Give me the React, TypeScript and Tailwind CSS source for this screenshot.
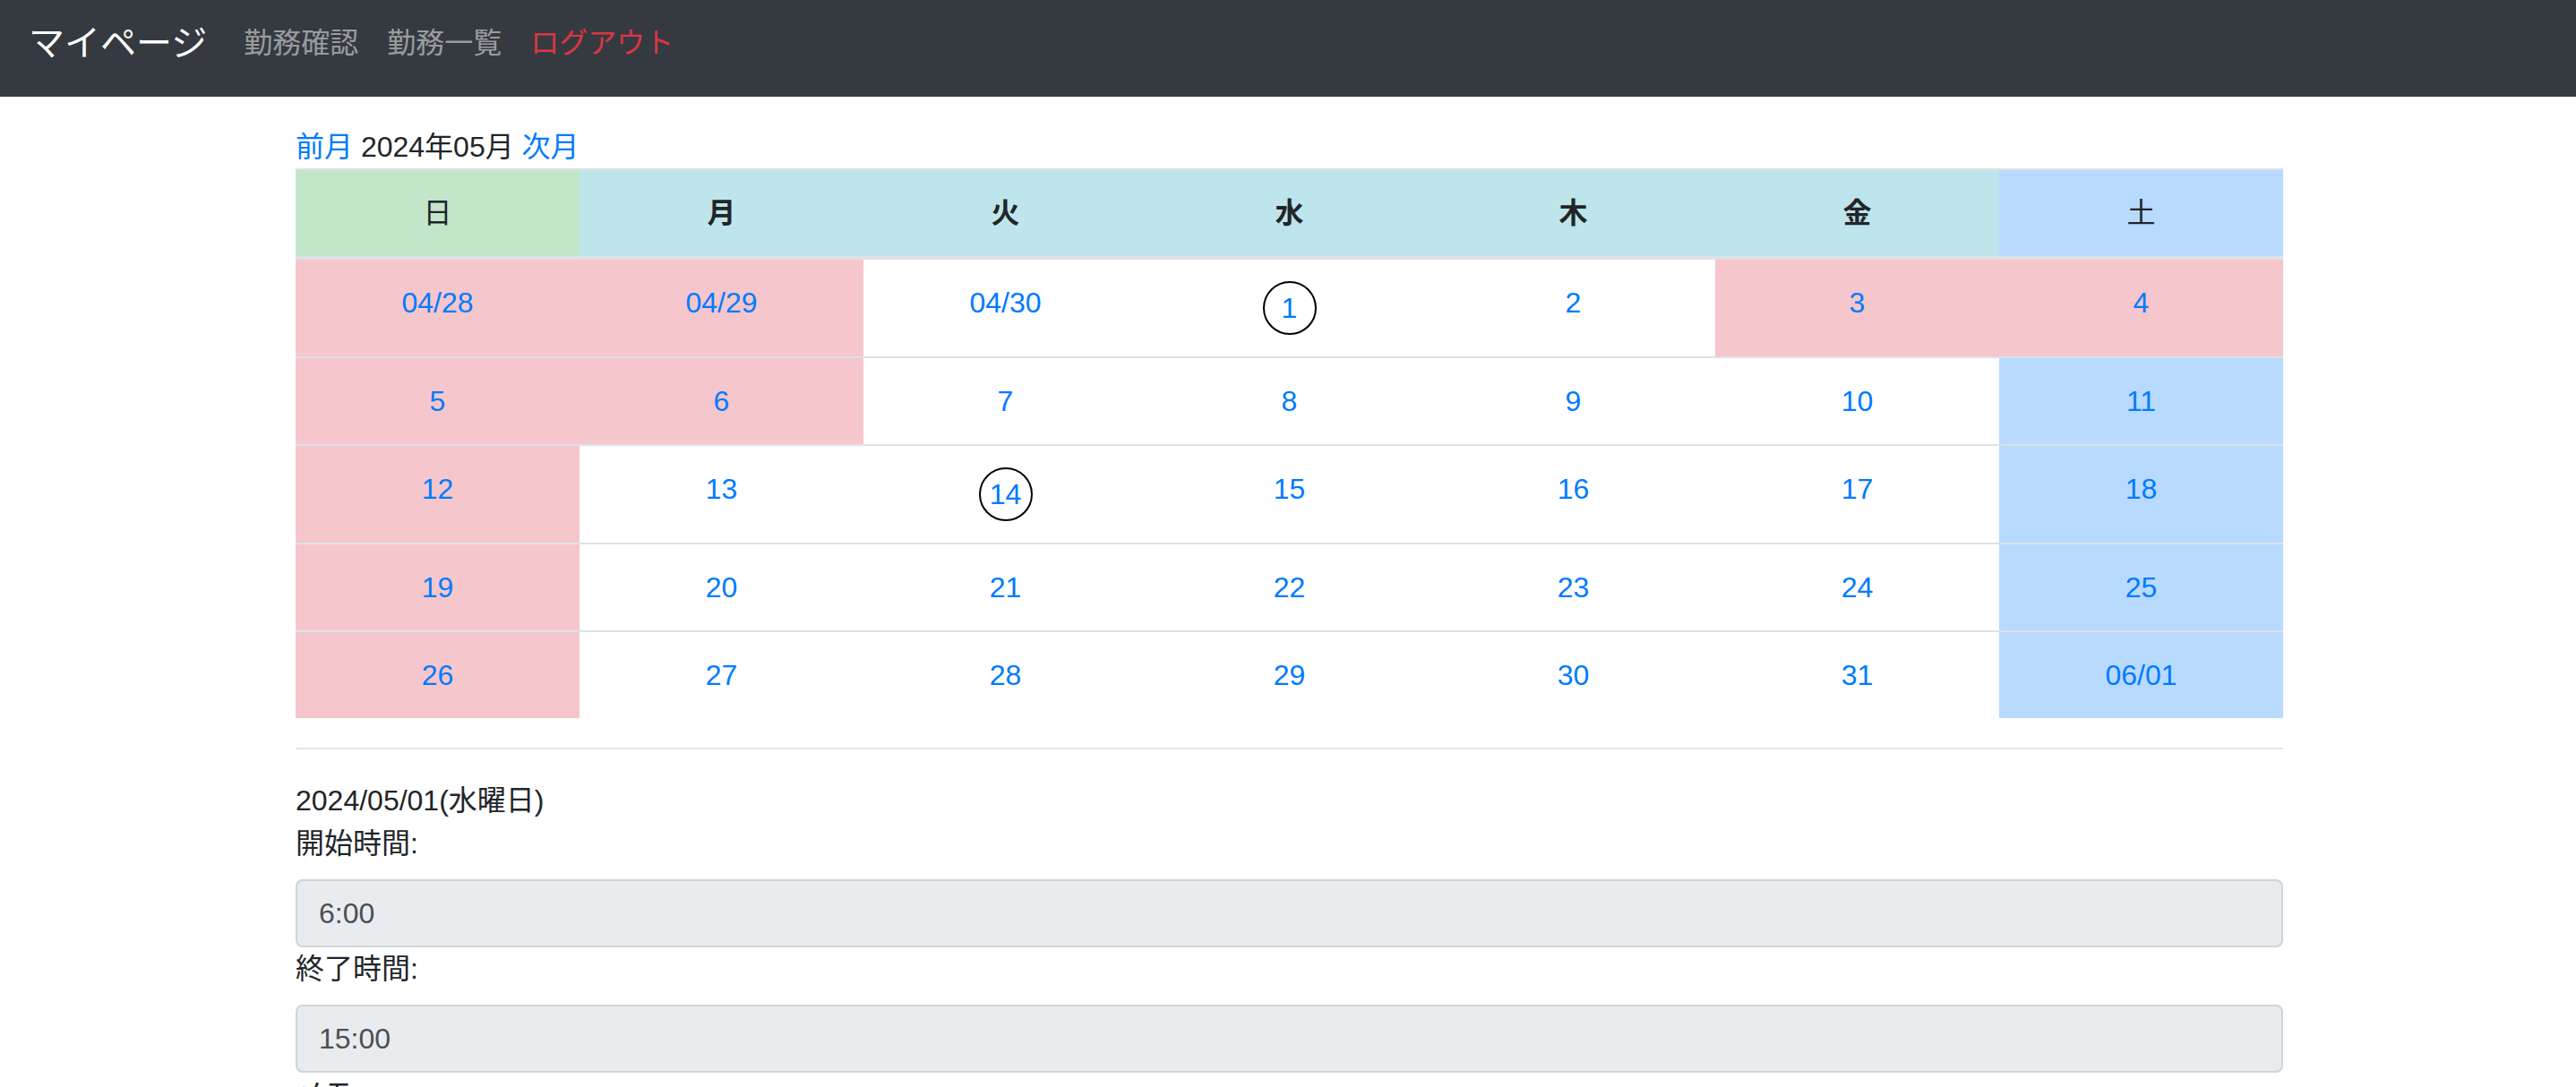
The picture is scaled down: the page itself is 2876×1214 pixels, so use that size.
import React from 'react';

type Tone = 'red' | 'blue' | 'none';

type Day = {
  label: string;
  tone: Tone;
  circle?: boolean;
};

const FONT = '[font-family:"Liberation_Sans","Noto_Sans_CJK_JP",sans-serif]';

const weekHeads = [
  { label: '日', bg: 'bg-[#c3e6cb]', bold: false },
  { label: '月', bg: 'bg-[#bee5eb]', bold: true },
  { label: '火', bg: 'bg-[#bee5eb]', bold: true },
  { label: '水', bg: 'bg-[#bee5eb]', bold: true },
  { label: '木', bg: 'bg-[#bee5eb]', bold: true },
  { label: '金', bg: 'bg-[#bee5eb]', bold: true },
  { label: '土', bg: 'bg-[#b8daff]', bold: false },
];

const weeks: Day[][] = [
  [
    { label: '04/28', tone: 'red' },
    { label: '04/29', tone: 'red' },
    { label: '04/30', tone: 'none' },
    { label: '1', tone: 'none', circle: true },
    { label: '2', tone: 'none' },
    { label: '3', tone: 'red' },
    { label: '4', tone: 'red' },
  ],
  [
    { label: '5', tone: 'red' },
    { label: '6', tone: 'red' },
    { label: '7', tone: 'none' },
    { label: '8', tone: 'none' },
    { label: '9', tone: 'none' },
    { label: '10', tone: 'none' },
    { label: '11', tone: 'blue' },
  ],
  [
    { label: '12', tone: 'red' },
    { label: '13', tone: 'none' },
    { label: '14', tone: 'none', circle: true },
    { label: '15', tone: 'none' },
    { label: '16', tone: 'none' },
    { label: '17', tone: 'none' },
    { label: '18', tone: 'blue' },
  ],
  [
    { label: '19', tone: 'red' },
    { label: '20', tone: 'none' },
    { label: '21', tone: 'none' },
    { label: '22', tone: 'none' },
    { label: '23', tone: 'none' },
    { label: '24', tone: 'none' },
    { label: '25', tone: 'blue' },
  ],
  [
    { label: '26', tone: 'red' },
    { label: '27', tone: 'none' },
    { label: '28', tone: 'none' },
    { label: '29', tone: 'none' },
    { label: '30', tone: 'none' },
    { label: '31', tone: 'none' },
    { label: '06/01', tone: 'blue' },
  ],
];

const toneBg: Record<Tone, string> = {
  red: 'bg-[#f5c6cb]',
  blue: 'bg-[#b8daff]',
  none: 'bg-white',
};

function Navbar() {
  return (
    <nav className="flex h-[108px] items-center bg-[#343a40] pb-[12px] pl-[32px]">
      <a href="#" className="mr-[25px] text-[40px] leading-[60px] text-white">マイページ</a>
      <a href="#" className="px-[16px] text-[32px] leading-[48px] text-white/50">勤務確認</a>
      <a href="#" className="px-[16px] text-[32px] leading-[48px] text-white/50">勤務一覧</a>
      <a href="#" className="px-[16px] text-[32px] leading-[48px] text-[#dc3545]">ログアウト</a>
    </nav>
  );
}

function Calendar() {
  return (
    <table className="w-full table-fixed border-collapse">
      <thead>
        <tr>
          {weekHeads.map((h) => (
            <th
              key={h.label}
              className={`${h.bg} ${h.bold ? 'font-bold' : 'font-normal'} border-t-2 border-b-4 border-[#dee2e6] p-[24px] text-center align-top leading-[48px]`}
            >
              {h.label}
            </th>
          ))}
        </tr>
      </thead>
      <tbody>
        {weeks.map((week, i) => (
          <tr key={i}>
            {week.map((d) => (
              <td
                key={d.label}
                className={`${toneBg[d.tone]} border-t-2 border-[#dee2e6] p-[24px] text-center align-top leading-[48px]`}
              >
                {d.circle ? (
                  <a href="#" className="mx-auto flex h-[60px] w-[60px] items-center justify-center rounded-full border-2 border-black text-[#007bff]">
                    {d.label}
                  </a>
                ) : (
                  <a href="#" className="text-[#007bff]">{d.label}</a>
                )}
              </td>
            ))}
          </tr>
        ))}
      </tbody>
    </table>
  );
}

export default function App() {
  return (
    <div className={`${FONT} min-h-screen bg-white text-[32px] leading-[48px] text-[#212529]`}>
      <Navbar />
      <main className="pl-[330px] pr-[327px] pt-[32px]">
        <div>
          <a href="#" className="text-[#007bff]">前月</a> 2024年05月 <a href="#" className="text-[#007bff]">次月</a>
        </div>
        <Calendar />
        <hr className="mt-[33px] mb-[33px] border-t-2 border-[#e6e6e6]" />
        <div>2024/05/01(水曜日)</div>
        <div>
          <label className="mb-[16px] block">開始時間:</label>
          <input
            readOnly
            value="6:00"
            className="block h-[76px] w-full rounded-[8px] border-2 border-[#ced4da] bg-[#e9ecef] px-[24px] text-[32px] text-[#495057] outline-none"
          />
          <label className="mb-[16px] block">終了時間:</label>
          <input
            readOnly
            value="15:00"
            className="block h-[76px] w-full rounded-[8px] border-2 border-[#ced4da] bg-[#e9ecef] px-[24px] text-[32px] text-[#495057] outline-none"
          />
          <label className="mb-[16px] block">メモ:</label>
          <textarea
            readOnly
            className="block h-[150px] w-full rounded-[8px] border-2 border-[#ced4da] bg-[#e9ecef] px-[24px] text-[32px] text-[#495057] outline-none"
          />
        </div>
      </main>
    </div>
  );
}
